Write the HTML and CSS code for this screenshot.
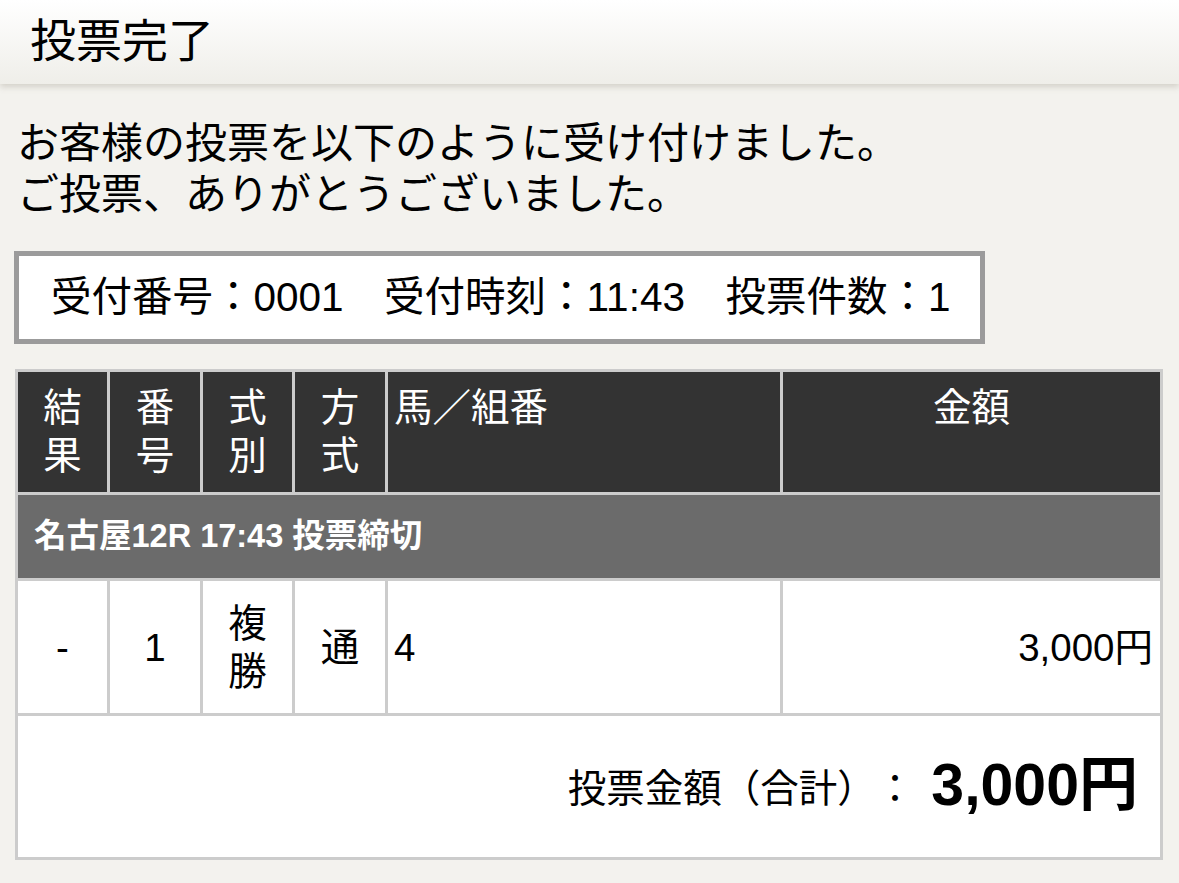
FILE: index.html
```html
<!DOCTYPE html>
<html lang="ja">
<head>
    <meta charset="UTF-8">
    <meta name="viewport" content="width=device-width, initial-scale=1.0">
    <title>投票完了</title>
    <link rel="stylesheet" href="styles.css">
</head>
<body>
    <header class="page-header">
        <h1>投票完了</h1>
    </header>

    <main class="content">
        <p class="message">お客様の投票を以下のように受け付けました。<br>ご投票、ありがとうございました。</p>

        <div class="receipt">
            <div class="receipt-box">受付番号：0001　受付時刻：11:43　投票件数：1</div>
        </div>

        <table class="bet-table">
            <colgroup>
                <col class="col-narrow-a">
                <col class="col-narrow-b">
                <col class="col-narrow-a">
                <col class="col-narrow-b">
                <col class="col-horse">
                <col class="col-amount">
            </colgroup>
            <thead>
                <tr>
                    <th>結果</th>
                    <th>番号</th>
                    <th>式別</th>
                    <th>方式</th>
                    <th class="left">馬／組番</th>
                    <th>金額</th>
                </tr>
            </thead>
            <tbody>
                <tr class="race-row">
                    <td colspan="6">名古屋12R 17:43 投票締切</td>
                </tr>
                <tr class="bet-row">
                    <td>-</td>
                    <td>1</td>
                    <td>複勝</td>
                    <td>通</td>
                    <td class="left">4</td>
                    <td class="right">3,000円</td>
                </tr>
                <tr class="total-row">
                    <td colspan="6">投票金額（合計）：<span class="total-amount">3,000円</span></td>
                </tr>
            </tbody>
        </table>
    </main>
</body>
</html>
```

FILE: styles.css
```css
/* Reset */
* {
    margin: 0;
    padding: 0;
    box-sizing: border-box;
}

body {
    font-family: 'Liberation Sans', 'Noto Sans CJK JP', sans-serif;
    background: #f3f2ee;
    color: #000;
    width: 1179px;
    overflow: hidden;
    text-spacing-trim: space-all;
}

/* Header bar */
.page-header {
    height: 84px;
    padding-left: 30px;
    background: linear-gradient(to bottom, #ffffff, #efeee9);
    box-shadow: 0 3px 6px rgba(120, 110, 90, 0.25);
    display: flex;
    align-items: center;
}

.page-header h1 {
    font-size: 46px;
    font-weight: normal;
    line-height: 1;
    padding-bottom: 2px;
}

.content {
    padding: 34px 16px 21px 15px;
}

.message {
    font-size: 42px;
    line-height: 51px;
    padding-left: 2px;
}

/* Receipt info box */
.receipt {
    display: flex;
    margin-top: 31px;
    margin-left: -1px;
}

.receipt-box {
    background: #fff;
    border: 5px solid #9b9b9b;
    padding: 16px 30px 16px 32px;
    font-size: 40.5px;
    line-height: 51px;
    white-space: nowrap;
}

/* Bet table */
.bet-table {
    width: 100%;
    margin-top: 25px;
    border-collapse: collapse;
    border: 3px solid #cccccc;
    table-layout: fixed;
}

.col-narrow-a { width: 92px; }
.col-narrow-b { width: 93px; }
.col-horse { width: 395px; }
.col-amount { width: auto; }

.bet-table th,
.bet-table td {
    border: 3px solid #cccccc;
    font-size: 38.5px;
    line-height: 48px;
    text-align: center;
}

.bet-table th {
    background: #333333;
    color: #fff;
    font-weight: normal;
    vertical-align: top;
    padding: 12px 18px;
}

.bet-table .left {
    text-align: left;
    padding-left: 6px;
    padding-right: 6px;
}

.bet-table .right {
    text-align: right;
    padding-right: 7px;
}

.race-row td {
    background: #6b6b6b;
    color: #fff;
    font-size: 32.5px;
    font-weight: bold;
    line-height: 45px;
    text-align: left;
    padding: 19px 16px;
}

.bet-row td {
    background: #fff;
    padding: 19px 18px 17px;
    vertical-align: middle;
}

.total-row td {
    background: #fff;
    text-align: right;
    padding: 38px 22px 38px 10px;
    height: 144px;
    vertical-align: middle;
}

.total-amount {
    font-size: 59px;
    font-weight: bold;
    margin-left: 17px;
    vertical-align: -3px;
}
```
